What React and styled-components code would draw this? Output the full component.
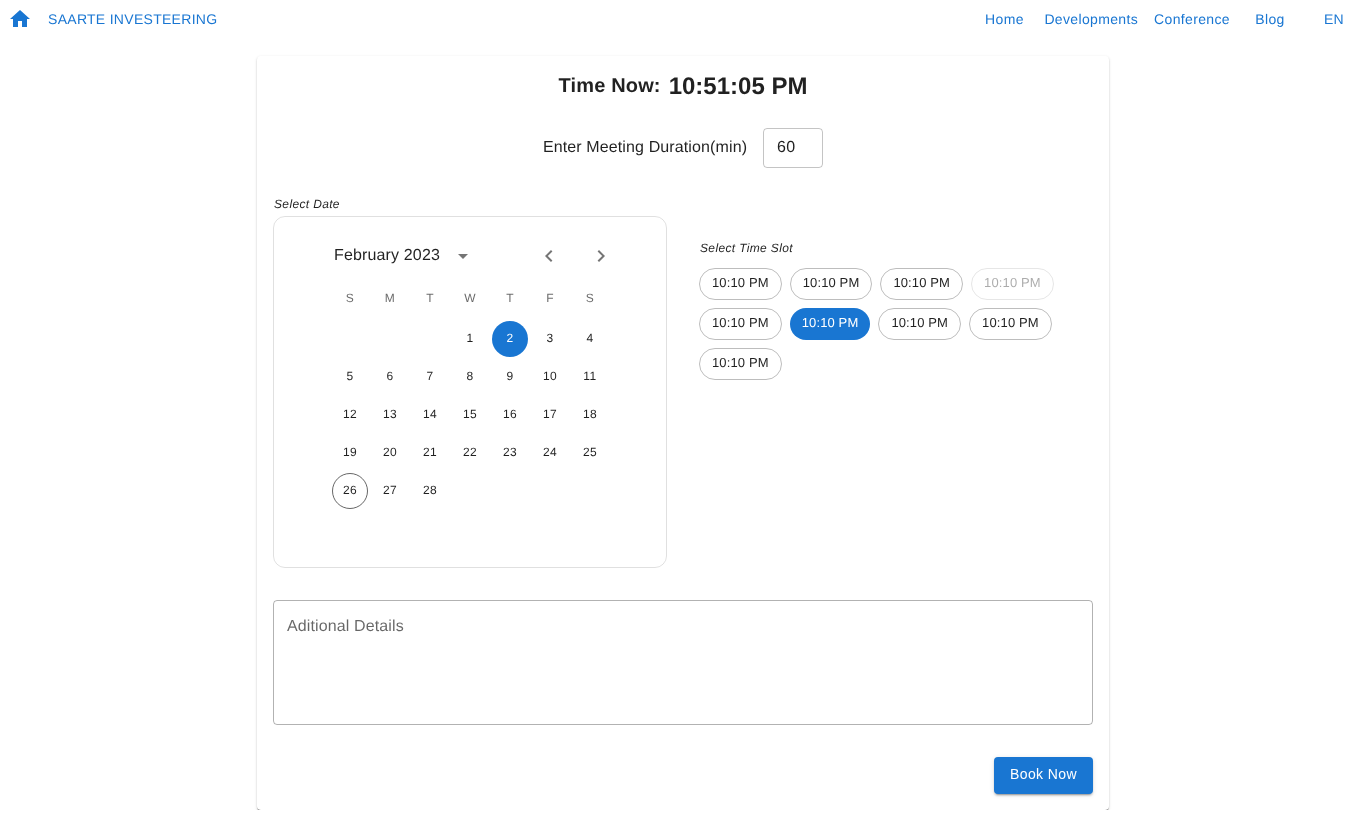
import styled, { createGlobalStyle } from 'styled-components'

const Global = createGlobalStyle`
    * { box-sizing: border-box; }
    body {
        margin: 0;
        background: #fff;
        font-family: "Liberation Sans", Arial, sans-serif;
        color: rgba(0, 0, 0, 0.87);
        text-rendering: geometricPrecision;
    }
    #root {
        will-change: transform;
    }
`

const Nav = styled.header`
    display: flex;
    align-items: center;
    height: 38px;
`

const HomeLink = styled.a`
    display: flex;
    margin-left: 8px;
    margin-right: 8px;
    color: #1976d2;
`

const NavButton = styled.a`
    min-width: 64px;
    padding: 0 8px;
    font-size: 14px;
    line-height: 38px;
    letter-spacing: 0.35px;
    text-align: center;
    color: #1976d2;
`

const Brand = styled(NavButton)`
    letter-spacing: 0.29px;
`

const Spacer = styled.div`
    flex: 1;
`

const Card = styled.main`
    width: 852px;
    height: 754px;
    margin: 18px auto 0;
    padding: 16px;
    display: flex;
    flex-direction: column;
    border-radius: 4px;
    box-shadow: 0 2px 1px -1px rgba(0, 0, 0, 0.4), 0 1px 1px 0 rgba(0, 0, 0, 0.24), 0 1px 3px 0 rgba(0, 0, 0, 0.16);
`

const Clock = styled.h2`
    margin: 0;
    height: 28px;
    padding-top: 1px;
    display: flex;
    justify-content: center;
    align-items: center;
    gap: 8px;
    font-size: 20px;
    font-weight: 700;
    letter-spacing: 0.15px;
    color: rgba(0, 0, 0, 0.87);
`

const ClockTime = styled.span`
    font-size: 24px;
    letter-spacing: 0;
`

const Duration = styled.div`
    margin-top: 28px;
    display: flex;
    justify-content: center;
    align-items: center;
    gap: 16px;
    font-size: 16px;
    letter-spacing: 0.12px;
`

const DurationLabel = styled.span`
    padding-bottom: 1px;
`

const DurationBox = styled.div`
    width: 60px;
    height: 40px;
    padding: 0 0 0 13px;
    display: flex;
    align-items: center;
    border: 1px solid rgba(0, 0, 0, 0.23);
    border-radius: 4px;
`

const Columns = styled.section`
    margin-top: 28px;
    display: flex;
    gap: 32px;
`

const Caption = styled.div`
    padding-left: 1px;
    font-size: 12px;
    font-style: italic;
    line-height: 16px;
    letter-spacing: 0.35px;
`

const DateColumn = styled.div`
    width: 394px;
`

const Calendar = styled.div`
    height: 352px;
    margin-top: 4px;
    padding: 16px 56px 0;
    border: 1px solid rgba(0, 0, 0, 0.12);
    border-radius: 12px;
`

const CalendarHeader = styled.div`
    height: 44px;
    display: flex;
    align-items: center;
`

const Month = styled.span`
    margin-left: 4px;
    padding-top: 1px;
    font-size: 16px;
    letter-spacing: 0.15px;
    white-space: nowrap;
`

const ArrowBox = styled.span`
    display: flex;
    color: rgba(0, 0, 0, 0.54);
    margin-top: 2px;
    margin-left: ${(props) => props.$left}px;
`

const WeekRow = styled.div`
    margin-top: 1px;
    height: 40px;
    display: grid;
    grid-template-columns: repeat(7, 40px);
    align-items: center;
    justify-items: center;
    font-size: 12px;
    letter-spacing: 0.4px;
    color: rgba(0, 0, 0, 0.6);
`

const DayGrid = styled.div`
    display: grid;
    grid-template-columns: repeat(7, 40px);
    grid-auto-rows: 38px;
    margin-top: 2px;
    justify-items: center;
    align-items: center;
`

const Day = styled.span`
    width: 36px;
    height: 36px;
    padding-bottom: 2px;
    display: flex;
    align-items: center;
    justify-content: center;
    border-radius: 50%;
    font-size: 12px;
    letter-spacing: 0.4px;
    color: ${(props) => (props.$selected ? '#fff' : 'rgba(0, 0, 0, 0.87)')};
    background: ${(props) => (props.$selected ? '#1976d2' : 'transparent')};
    border: ${(props) => (props.$today ? '1px solid rgba(0, 0, 0, 0.6)' : 'none')};
`

const SlotColumn = styled.div`
    padding-top: 44px;
    width: 370px;
`

const Slots = styled.div`
    margin-top: 12px;
    display: flex;
    flex-wrap: wrap;
    gap: 8px;
`

const Chip = styled.span`
    height: 32px;
    padding: 0 12px 4px;
    display: inline-flex;
    align-items: center;
    border-radius: 16px;
    font-size: 13px;
    letter-spacing: 0.13px;
    border: ${(props) => (props.$selected ? 'none' : '1px solid #bdbdbd')};
    background: ${(props) => (props.$selected ? '#1976d2' : 'transparent')};
    color: ${(props) => (props.$selected ? '#fff' : 'rgba(0, 0, 0, 0.87)')};
    opacity: ${(props) => (props.$disabled ? 0.38 : 1)};
`

const Details = styled.div`
    margin-top: 32px;
    height: 125px;
    padding: 14px 13px;
    border: 1px solid rgba(0, 0, 0, 0.3);
    border-radius: 4px;
    font-size: 16px;
    line-height: 23px;
    letter-spacing: 0.12px;
    color: rgba(0, 0, 0, 0.6);
`

const Footer = styled.div`
    margin-top: 32px;
    display: flex;
    justify-content: flex-end;
`

const BookButton = styled.button`
    height: 37px;
    padding: 0 16px 4px;
    border: none;
    border-radius: 4px;
    background: #1976d2;
    color: #fff;
    font-family: inherit;
    font-size: 14px;
    letter-spacing: 0.4px;
    box-shadow: 0 3px 1px -2px rgba(0, 0, 0, 0.2), 0 2px 2px 0 rgba(0, 0, 0, 0.14), 0 1px 5px 0 rgba(0, 0, 0, 0.12);
`

const weekDays = ['S', 'M', 'T', 'W', 'T', 'F', 'S']
const links = ['Home', 'Developments', 'Conference', 'Blog', 'EN']
const days = [null, null, null]
for (let i = 1; i <= 28; i++) days.push(i)
const slots = [0, 1, 2, 3, 4, 5, 6, 7, 8]

const App = () => {
    return (
        <>
            <Global />
            <Nav>
                <HomeLink>
                    <svg width="24" height="24" viewBox="0 0 24 24" fill="currentColor">
                        <path d="M10 20v-6h4v6h5v-8h3L12 3 2 12h3v8z" />
                    </svg>
                </HomeLink>
                <Brand>SAARTE INVESTEERING</Brand>
                <Spacer />
                {links.map((l) => (
                    <NavButton key={l}>{l}</NavButton>
                ))}
            </Nav>
            <Card>
                <Clock>
                    Time Now: <ClockTime>10:51:05 PM</ClockTime>
                </Clock>
                <Duration>
                    <DurationLabel>Enter Meeting Duration(min)</DurationLabel>
                    <DurationBox>60</DurationBox>
                </Duration>
                <Columns>
                    <DateColumn>
                        <Caption>Select Date</Caption>
                        <Calendar>
                            <CalendarHeader>
                                <Month>February 2023</Month>
                                <ArrowBox $left={11}>
                                    <svg width="24" height="24" viewBox="0 0 24 24" fill="currentColor">
                                        <path d="M7 10l5 5 5-5z" />
                                    </svg>
                                </ArrowBox>
                                <ArrowBox $left={62}>
                                    <svg width="24" height="24" viewBox="0 0 24 24" fill="currentColor">
                                        <path d="M15.41 7.41 14 6l-6 6 6 6 1.41-1.41L10.83 12z" />
                                    </svg>
                                </ArrowBox>
                                <ArrowBox $left={28}>
                                    <svg width="24" height="24" viewBox="0 0 24 24" fill="currentColor">
                                        <path d="M10 6 8.59 7.41 13.17 12l-4.58 4.59L10 18l6-6z" />
                                    </svg>
                                </ArrowBox>
                            </CalendarHeader>
                            <WeekRow>
                                {weekDays.map((d, i) => (
                                    <span key={i}>{d}</span>
                                ))}
                            </WeekRow>
                            <DayGrid>
                                {days.map((d, i) => (
                                    <Day key={i} $selected={d === 2} $today={d === 26}>{d}</Day>
                                ))}
                            </DayGrid>
                        </Calendar>
                    </DateColumn>
                    <SlotColumn>
                        <Caption>Select Time Slot</Caption>
                        <Slots>
                            {slots.map((s) => (
                                <Chip key={s} $disabled={s === 3} $selected={s === 5}>10:10 PM</Chip>
                            ))}
                        </Slots>
                    </SlotColumn>
                </Columns>
                <Details>Aditional Details</Details>
                <Footer>
                    <BookButton>Book Now</BookButton>
                </Footer>
            </Card>
        </>
    )
}

export default App;
